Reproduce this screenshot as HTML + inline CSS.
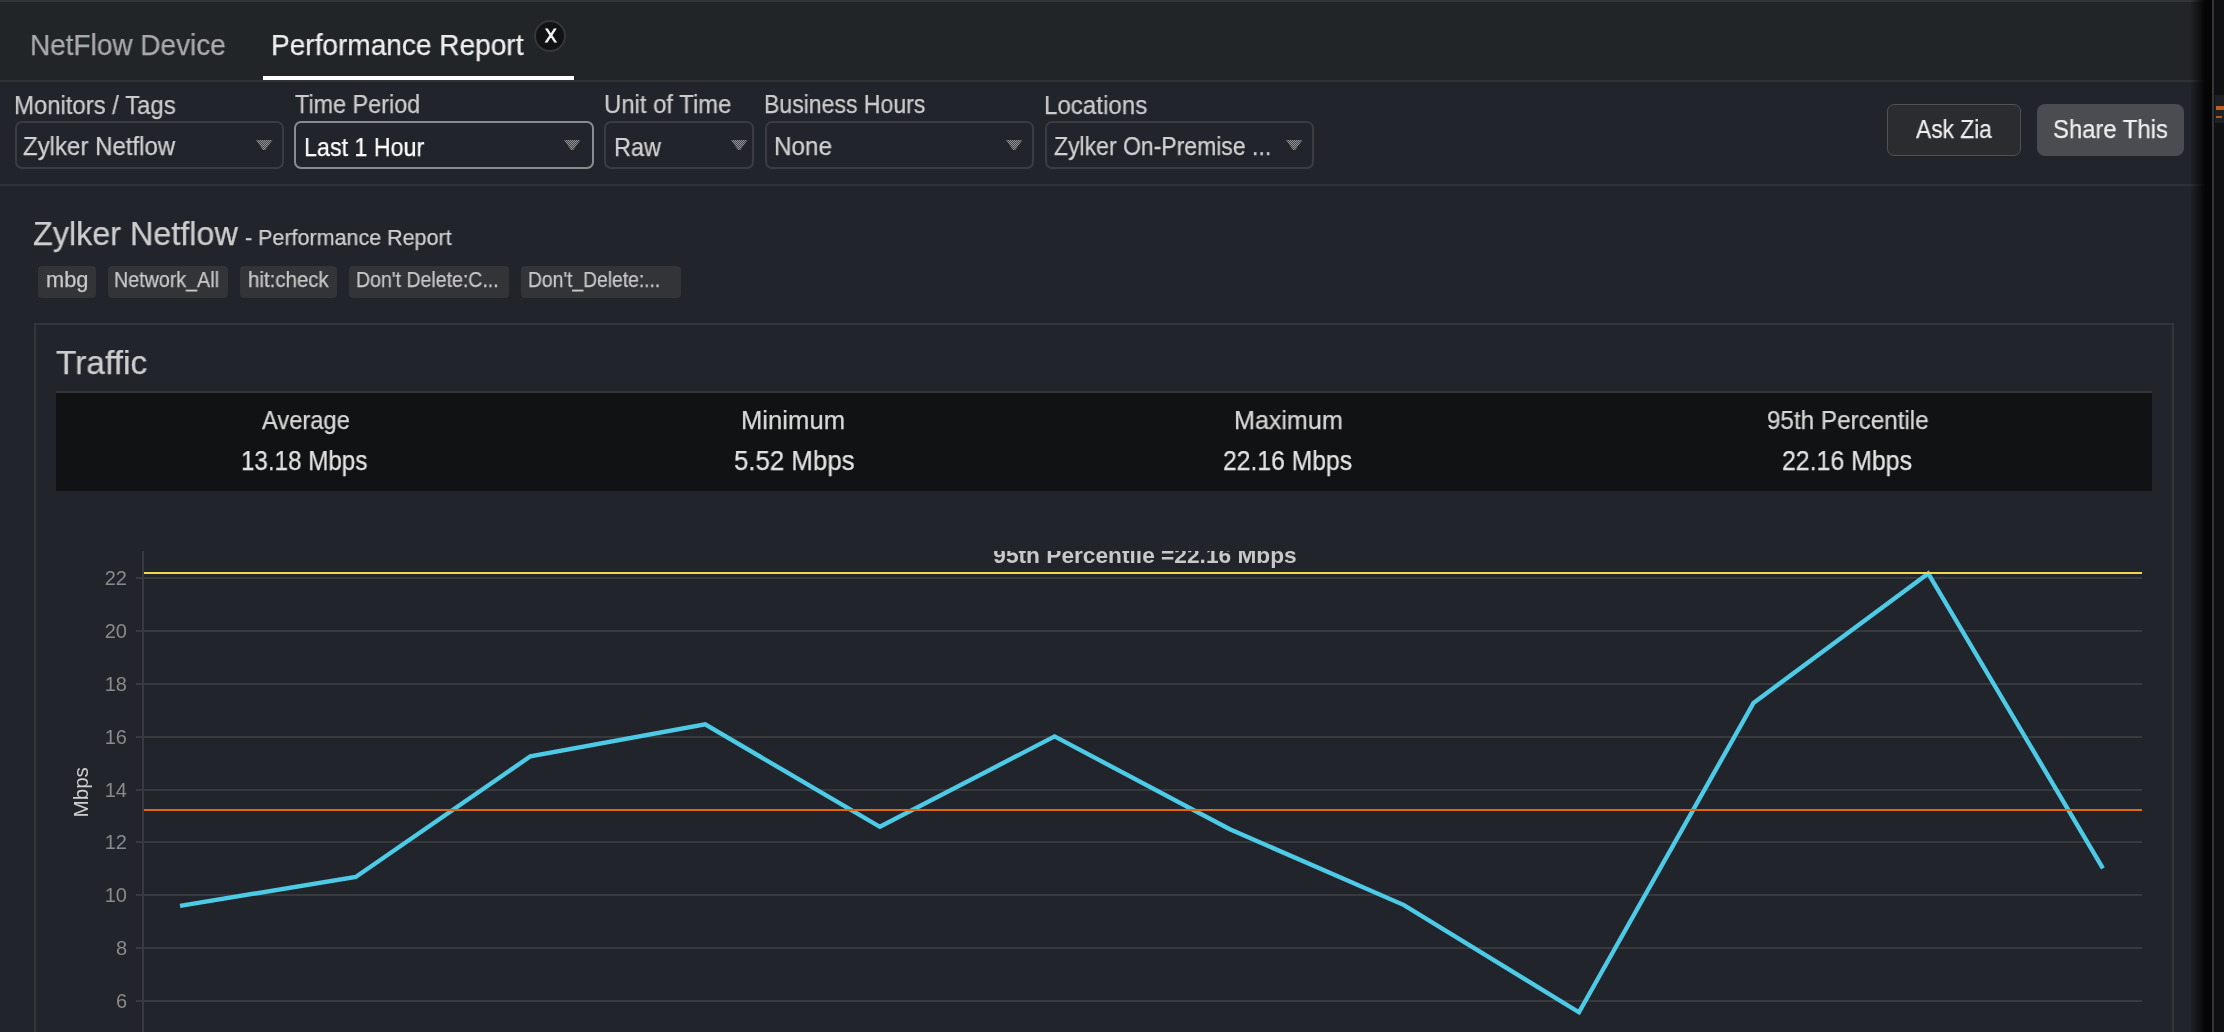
<!DOCTYPE html>
<html><head><meta charset="utf-8">
<style>
html,body{margin:0;padding:0;}
body{width:2224px;height:1032px;overflow:hidden;position:relative;background:#21242b;font-family:"Liberation Sans",sans-serif;}
.a{position:absolute;}
.t{position:absolute;white-space:nowrap;line-height:1;transform-origin:0 0;will-change:transform;-webkit-text-stroke:0.25px currentColor;}
#topbar{left:0;top:0;width:2224px;height:80px;background:#222528;}
#topline{left:0;top:0;width:2224px;height:2px;background:#333437;}
#tabline{left:0;top:80px;width:2224px;height:2px;background:#303236;}
#filterline{left:0;top:184px;width:2224px;height:2px;background:#2e3035;}
.box{position:absolute;box-sizing:border-box;border:2px solid #3a3c41;border-radius:7px;height:48px;top:121px;}
.arr{position:absolute;width:17px;height:11px;top:140px;}
.tag{position:absolute;top:266px;height:32px;background:#333438;border-radius:4px;}
</style></head>
<body>
<svg width="0" height="0" style="position:absolute"><defs><pattern id="dots" width="2" height="2" patternUnits="userSpaceOnUse"><rect width="2" height="2" fill="#909092"/><rect x="1" y="0" width="1" height="1" fill="#46474b"/><rect x="0" y="1" width="1" height="1" fill="#46474b"/></pattern></defs></svg>
<div class="a" id="topbar"></div>
<div class="a" id="topline"></div>
<div class="a" id="tabline"></div>
<div class="a" id="filterline"></div>

<!-- tabs -->
<div class="t" style="left:30.02px;top:30.10px;font-size:29.8px;color:#a9aaab;transform:scaleX(0.9385);">NetFlow Device</div>
<div class="t" style="left:271.40px;top:29.80px;font-size:29.5px;color:#ededed;transform:scaleX(0.9504);">Performance Report</div>
<div class="a" style="left:263px;top:76px;width:311px;height:4px;background:#ffffff;"></div>
<div class="a" style="left:534px;top:20px;width:32px;height:32px;box-sizing:border-box;border-radius:50%;background:#111214;border:2px solid #36373a;"></div>
<div class="t" style="left:545.3px;top:28.2px;font-size:17.5px;color:#f4f4f4;-webkit-text-stroke:0.8px #f4f4f4;">X</div>

<!-- filters -->
<div class="t" style="left:13.82px;top:92.60px;font-size:25.5px;color:#cbcbcb;transform:scaleX(0.9376);">Monitors / Tags</div>
<div class="box" style="left:15px;width:269px;"></div>
<div class="t" style="left:23.15px;top:133.90px;font-size:25.3px;color:#d0d0d0;transform:scaleX(0.9491);">Zylker Netflow</div>
<svg class="arr" style="left:255.8px;" width="17" height="11" viewBox="0 0 17 11"><path d="M0 0H16.4L9.3 10H7.1Z" fill="url(#dots)"/></svg>

<div class="t" style="left:294.50px;top:92.30px;font-size:25.5px;color:#cbcbcb;transform:scaleX(0.9170);">Time Period</div>
<div class="box" style="left:294px;width:300px;border-color:#8a8b8d;"></div>
<div class="t" style="left:303.91px;top:134.00px;font-size:26.0px;color:#ffffff;transform:scaleX(0.8947);">Last 1 Hour</div>
<svg class="arr" style="left:563.8px;" width="17" height="11" viewBox="0 0 17 11"><path d="M0 0H16.4L9.3 10H7.1Z" fill="url(#dots)"/></svg>

<div class="t" style="left:603.53px;top:92.20px;font-size:25.5px;color:#cbcbcb;transform:scaleX(0.9368);">Unit of Time</div>
<div class="box" style="left:604px;width:150px;"></div>
<div class="t" style="left:613.74px;top:134.60px;font-size:25.3px;color:#d0d0d0;transform:scaleX(0.9286);">Raw</div>
<svg class="arr" style="left:730.8px;" width="17" height="11" viewBox="0 0 17 11"><path d="M0 0H16.4L9.3 10H7.1Z" fill="url(#dots)"/></svg>

<div class="t" style="left:764.09px;top:92.20px;font-size:25.5px;color:#cbcbcb;transform:scaleX(0.9034);">Business Hours</div>
<div class="box" style="left:765px;width:269px;"></div>
<div class="t" style="left:773.58px;top:134.40px;font-size:25.3px;color:#d0d0d0;transform:scaleX(0.9586);">None</div>
<svg class="arr" style="left:1005.8px;" width="17" height="11" viewBox="0 0 17 11"><path d="M0 0H16.4L9.3 10H7.1Z" fill="url(#dots)"/></svg>

<div class="t" style="left:1043.91px;top:92.80px;font-size:25.5px;color:#cbcbcb;transform:scaleX(0.9458);">Locations</div>
<div class="box" style="left:1045px;width:269px;"></div>
<div class="t" style="left:1053.69px;top:133.90px;font-size:25.3px;color:#d0d0d0;transform:scaleX(0.9089);">Zylker On-Premise ...</div>
<svg class="arr" style="left:1285.8px;" width="17" height="11" viewBox="0 0 17 11"><path d="M0 0H16.4L9.3 10H7.1Z" fill="url(#dots)"/></svg>

<!-- buttons -->
<div class="a" style="left:1887px;top:104px;width:134px;height:52px;box-sizing:border-box;background:#2b2c2f;border:1.5px solid #505155;border-radius:7px;"></div>
<div class="t" style="left:1916.00px;top:116.90px;font-size:25.7px;color:#eeeeee;transform:scaleX(0.8860);">Ask Zia</div>
<div class="a" style="left:2037px;top:104px;width:147px;height:52px;background:#4a4c52;border-radius:8px;"></div>
<div class="t" style="left:2053.27px;top:116.90px;font-size:25.7px;color:#eeeeee;transform:scaleX(0.9279);">Share This</div>

<!-- title -->
<div class="t" style="left:33.42px;top:216.60px;font-size:33.0px;color:#cdcdcd;transform:scaleX(0.9798);">Zylker Netflow</div>
<div class="t" style="left:244.93px;top:226.70px;font-size:22.2px;color:#d0d0d0;transform:scaleX(0.9684);">- Performance Report</div>

<!-- tags -->
<div class="tag" style="left:38px;width:58px;"></div>
<div class="t" style="left:45.98px;top:269.70px;font-size:21.5px;color:#c8c8c8;transform:scaleX(1.0150);">mbg</div>
<div class="tag" style="left:108px;width:120px;"></div>
<div class="t" style="left:114.47px;top:269.70px;font-size:21.5px;color:#c8c8c8;transform:scaleX(0.9152);">Network_All</div>
<div class="tag" style="left:240px;width:97px;"></div>
<div class="t" style="left:247.75px;top:269.70px;font-size:21.5px;color:#c8c8c8;transform:scaleX(0.9512);">hit:check</div>
<div class="tag" style="left:349px;width:160px;"></div>
<div class="t" style="left:355.78px;top:269.90px;font-size:21.5px;color:#c8c8c8;transform:scaleX(0.9085);">Don't Delete:C...</div>
<div class="tag" style="left:521px;width:160px;"></div>
<div class="t" style="left:527.81px;top:269.90px;font-size:21.5px;color:#c8c8c8;transform:scaleX(0.8965);">Don't_Delete:...</div>

<!-- panel -->
<div class="a" style="left:34px;top:323px;width:2140px;height:720px;box-sizing:border-box;border:2px solid #333539;"></div>
<div class="t" style="left:55.71px;top:345.10px;font-size:34.0px;color:#cdcdcd;transform:scaleX(0.9857);">Traffic</div>
<div class="a" style="left:56px;top:391px;width:2096px;height:2px;background:#333539;"></div>
<div class="a" style="left:56px;top:393px;width:2096px;height:98px;background:#111214;"></div>
<div class="t" style="left:262.20px;top:408.10px;font-size:25.4px;color:#d6d6d6;transform:scaleX(0.9333);">Average</div>
<div class="t" style="left:241.45px;top:447.20px;font-size:27.6px;color:#e2e2e2;transform:scaleX(0.8761);">13.18 Mbps</div>
<div class="t" style="left:741.48px;top:408.10px;font-size:25.4px;color:#d6d6d6;transform:scaleX(1.0100);">Minimum</div>
<div class="t" style="left:733.86px;top:447.20px;font-size:27.6px;color:#e2e2e2;transform:scaleX(0.9362);">5.52 Mbps</div>
<div class="t" style="left:1234.02px;top:408.10px;font-size:25.4px;color:#d6d6d6;transform:scaleX(0.9879);">Maximum</div>
<div class="t" style="left:1223.00px;top:447.20px;font-size:27.6px;color:#e2e2e2;transform:scaleX(0.8951);">22.16 Mbps</div>
<div class="t" style="left:1767.15px;top:408.10px;font-size:25.4px;color:#d6d6d6;transform:scaleX(0.9545);">95th Percentile</div>
<div class="t" style="left:1781.70px;top:447.20px;font-size:27.6px;color:#e2e2e2;transform:scaleX(0.9014);">22.16 Mbps</div>

<!-- chart -->
<svg class="a" style="left:0;top:0;will-change:transform;" width="2224" height="1032" viewBox="0 0 2224 1032">
  <defs><clipPath id="cp"><rect x="0" y="551" width="2224" height="481"/></clipPath></defs>
  <g fill="none" stroke="#38393c" stroke-width="2">
    <path d="M136 578H2142M136 631H2142M136 684H2142M136 737H2142M136 790H2142M136 842H2142M136 895H2142M136 948H2142M136 1001H2142"/>
    <path d="M143 551V1032"/>
  </g>
  <g font-family="Liberation Sans" font-size="20" fill="#8a8a8a" text-anchor="end">
    <text x="127" y="585">22</text>
    <text x="127" y="638">20</text>
    <text x="127" y="691">18</text>
    <text x="127" y="744">16</text>
    <text x="127" y="797">14</text>
    <text x="127" y="849">12</text>
    <text x="127" y="902">10</text>
    <text x="127" y="955">8</text>
    <text x="127" y="1008">6</text>
  </g>
  <text transform="translate(87.5,792.3) rotate(-90)" text-anchor="middle" font-family="Liberation Sans" font-size="20" fill="#d0d0d0" textLength="50.5" lengthAdjust="spacingAndGlyphs">Mbps</text>
  <polyline fill="none" stroke="#4ccae6" stroke-width="4.4" stroke-linejoin="miter" points="180,905.8 355.7,877 530.4,756.3 705.2,724.4 879.9,826.8 1054.6,736.4 1229.3,829 1404,905.1 1579,1012.3 1753.5,702.9 1928.2,573.5 2102.9,868.3"/>
  <path d="M144 573H2142" stroke="#f2d44c" stroke-width="2"/>
  <path d="M144 810H2142" stroke="#e0680e" stroke-width="2"/>
  <g clip-path="url(#cp)">
    <text x="1145" y="563" text-anchor="middle" font-family="Liberation Sans" font-weight="bold" font-size="22.7" fill="#c8c8c8" textLength="303.5" lengthAdjust="spacingAndGlyphs">95th Percentile =22.16 Mbps</text>
  </g>
</svg>

<!-- right edge -->
<div class="a" style="left:2190px;top:0;width:16px;height:1032px;background:linear-gradient(to right,rgba(0,0,0,0),rgba(0,0,0,0.9));"></div>
<div class="a" style="left:2206px;top:0;width:6px;height:1032px;background:#050506;"></div>
<div class="a" style="left:2212px;top:0;width:2px;height:1032px;background:#343538;"></div>
<div class="a" style="left:2214px;top:0;width:10px;height:1032px;background:#0f1012;"></div>
<div class="a" style="left:2215px;top:95px;width:9px;height:28px;background:#1e2023;"></div>
<div class="a" style="left:2216px;top:106px;width:8px;height:4px;background:#c0601c;"></div>
<div class="a" style="left:2216px;top:116px;width:6px;height:2px;background:#b0581a;"></div>
</body></html>
